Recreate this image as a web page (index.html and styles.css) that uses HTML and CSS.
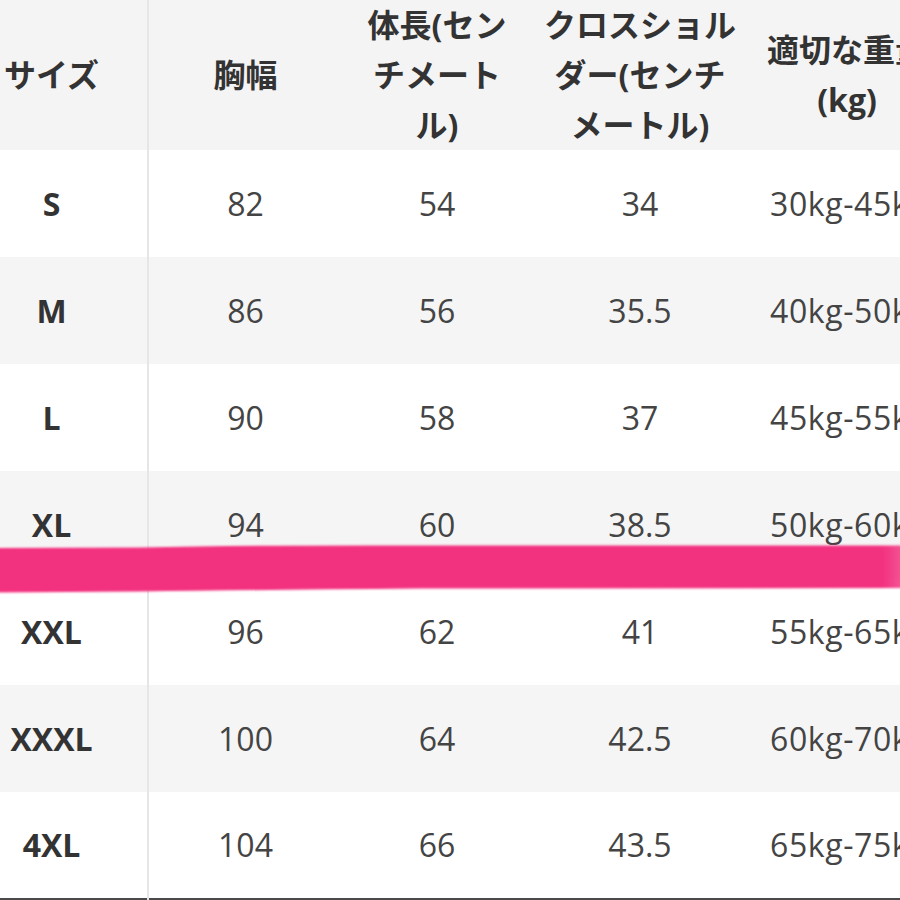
FILE: index.html
```html
<!DOCTYPE html>
<html lang="ja">
<head>
<meta charset="utf-8">
<title>サイズ表</title>
<link rel="stylesheet" href="styles.css">
</head>
<body>
<div class="page">
  <table class="size-table">
    <colgroup>
      <col class="col-size">
      <col class="col-chest">
      <col class="col-length">
      <col class="col-shoulder">
      <col class="col-weight">
    </colgroup>
    <thead>
      <tr>
        <th class="first">サイズ</th>
        <th>胸幅</th>
        <th>体長(セン<br>チメート<br>ル)</th>
        <th>クロスショル<br>ダー(センチ<br>メートル)</th>
        <th>適切な重量<br>(kg)</th>
      </tr>
    </thead>
    <tbody>
      <tr><th class="first">S</th><td>82</td><td>54</td><td>34</td><td>30kg-45kg</td></tr>
      <tr><th class="first">M</th><td>86</td><td>56</td><td>35.5</td><td>40kg-50kg</td></tr>
      <tr><th class="first">L</th><td>90</td><td>58</td><td>37</td><td>45kg-55kg</td></tr>
      <tr><th class="first">XL</th><td>94</td><td>60</td><td>38.5</td><td>50kg-60kg</td></tr>
      <tr><th class="first">XXL</th><td>96</td><td>62</td><td>41</td><td>55kg-65kg</td></tr>
      <tr><th class="first">XXXL</th><td>100</td><td>64</td><td>42.5</td><td>60kg-70kg</td></tr>
      <tr><th class="first">4XL</th><td>104</td><td>66</td><td>43.5</td><td>65kg-75kg</td></tr>
    </tbody>
  </table>
  <svg class="marker" width="900" height="60" viewBox="0 0 900 60" aria-hidden="true">
    <defs>
      <filter id="soft" x="-5%" y="-20%" width="110%" height="140%">
        <feGaussianBlur stdDeviation="1.2"/>
      </filter>
      <linearGradient id="fade" x1="0" y1="0" x2="1" y2="0">
        <stop offset="0" stop-color="#f2317f"/>
        <stop offset="0.975" stop-color="#f2317f"/>
        <stop offset="1" stop-color="#f2317f" stop-opacity="0.8"/>
      </linearGradient>
    </defs>
    <path d="M-10 12 L140 11.5 Q250 9 420 9.5 L905 9.5 L905 52 L420 52.5 Q250 54 140 55.5 L-10 56.5 Z" fill="url(#fade)" filter="url(#soft)"/>
  </svg>
</div>
</body>
</html>
```

FILE: styles.css
```css
html, body {
  margin: 0;
  padding: 0;
  background: #ffffff;
  overflow: hidden;
}

.page {
  position: relative;
  width: 900px;
  height: 900px;
  overflow: hidden;
}

.size-table {
  table-layout: fixed;
  width: 946px;
  border-collapse: collapse;
  border-spacing: 0;
  font-family: "Open Sans", "Noto Sans CJK JP", sans-serif;
  color: #444444;
  border-bottom: 2px solid #4a4a4a;
}

.col-size { width: 148px; }
.col-chest { width: 194px; }
.col-length { width: 190px; }
.col-shoulder { width: 216px; }
.col-weight { width: 198px; }

.size-table thead tr {
  background: #f4f4f4;
  height: 150px;
}

.size-table thead th {
  font-size: 32px;
  line-height: 50px;
  font-weight: 700;
  color: #333333;
  text-align: center;
  vertical-align: middle;
  white-space: nowrap;
  padding: 0;
}

.size-table tbody tr {
  height: 107px;
}

.size-table tbody tr:nth-child(even) {
  background: #f5f5f5;
}

.size-table td,
.size-table tbody th {
  font-size: 32px;
  line-height: 40px;
  text-align: center;
  vertical-align: middle;
  white-space: nowrap;
  padding: 0;
  font-weight: 400;
}

.size-table tbody th {
  font-weight: 700;
  color: #333333;
}

.size-table .first {
  padding-right: 44px;
  border-right: 2px solid #e6e6e6;
}

.size-table td:last-child {
  text-align: left;
  padding-left: 22px;
  letter-spacing: 0.6px;
}

.marker {
  position: absolute;
  left: 0;
  top: 536px;
  pointer-events: none;
}
```
